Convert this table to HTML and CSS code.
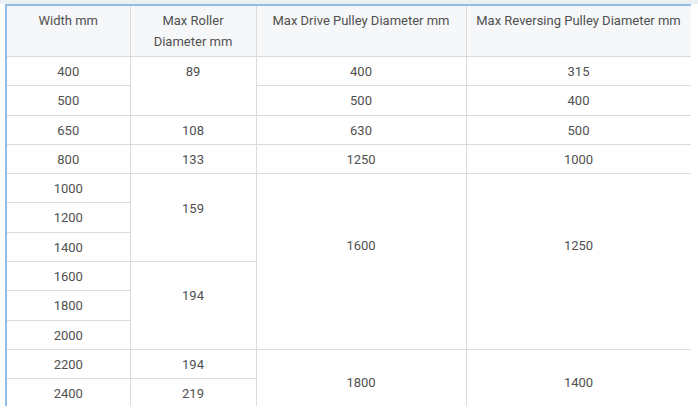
FILE: index.html
```html
<!DOCTYPE html>
<html>
<head>
<meta charset="utf-8">
<link rel="stylesheet" href="styles.css">
</head>
<body>
<div class="page">
  <div class="frame">
    <table class="spec">
      <colgroup>
        <col class="c1"><col class="c2"><col class="c3"><col class="c4">
      </colgroup>
      <thead>
        <tr>
          <th>Width mm</th>
          <th>Max Roller<br>Diameter mm</th>
          <th>Max Drive Pulley Diameter mm</th>
          <th>Max Reversing Pulley Diameter mm</th>
        </tr>
      </thead>
      <tbody>
        <tr><td>400</td><td rowspan="2">89</td><td>400</td><td>315</td></tr>
        <tr><td>500</td><td>500</td><td>400</td></tr>
        <tr><td>650</td><td>108</td><td>630</td><td>500</td></tr>
        <tr><td>800</td><td>133</td><td>1250</td><td>1000</td></tr>
        <tr><td>1000</td><td rowspan="3" class="pad-a">159</td><td rowspan="6" class="pad-c">1600</td><td rowspan="6" class="pad-c">1250</td></tr>
        <tr><td>1200</td></tr>
        <tr><td>1400</td></tr>
        <tr><td>1600</td><td rowspan="3" class="pad-b">194</td></tr>
        <tr><td>1800</td></tr>
        <tr><td>2000</td></tr>
        <tr><td>2200</td><td>194</td><td rowspan="2" class="pad-d">1800</td><td rowspan="2" class="pad-d">1400</td></tr>
        <tr><td>2400</td><td>219</td></tr>
      </tbody>
    </table>
  </div>
</div>
</body>
</html>
```

FILE: styles.css
```css
html, body {
  margin: 0;
  padding: 0;
  background: #ffffff;
}

.page {
  border-top: 4px solid #edf0f3;
  height: 402px;
  overflow: hidden;
}

.frame {
  margin-left: 5px;
  width: 686px;
  border-top: 2px solid #8fbde9;
  border-left: 2px solid #8fbde9;
  box-sizing: border-box;
  height: 100%;
  overflow: hidden;
}

.spec {
  border-collapse: collapse;
  table-layout: fixed;
  width: 684px;
  font-family: Roboto, "Liberation Sans", sans-serif;
  font-size: 13px;
  line-height: 21px;
  color: #505050;
}

.c1 { width: 123px; }
.c2 { width: 126px; }
.c3 { width: 210px; }
.c4 { width: 225px; }

.spec th {
  background: #f6f7f9;
  font-weight: normal;
  vertical-align: top;
  padding: 4px 6px 4px;
  height: 42px;
  border: 1px solid #dcdcdc;
  border-top: none;
  text-align: center;
}

.spec th:first-child,
.spec td:first-child {
  border-left: none;
}

.spec td {
  text-align: center;
  vertical-align: top;
  padding: 4px 6px 0;
  height: 24.3px;
  border: 1px solid #dcdcdc;
}

.spec td.pad-a { padding-top: 24px; }
.spec td.pad-b { padding-top: 23px; }
.spec td.pad-c { padding-top: 61px; }
.spec td.pad-d { padding-top: 22px; }
```
